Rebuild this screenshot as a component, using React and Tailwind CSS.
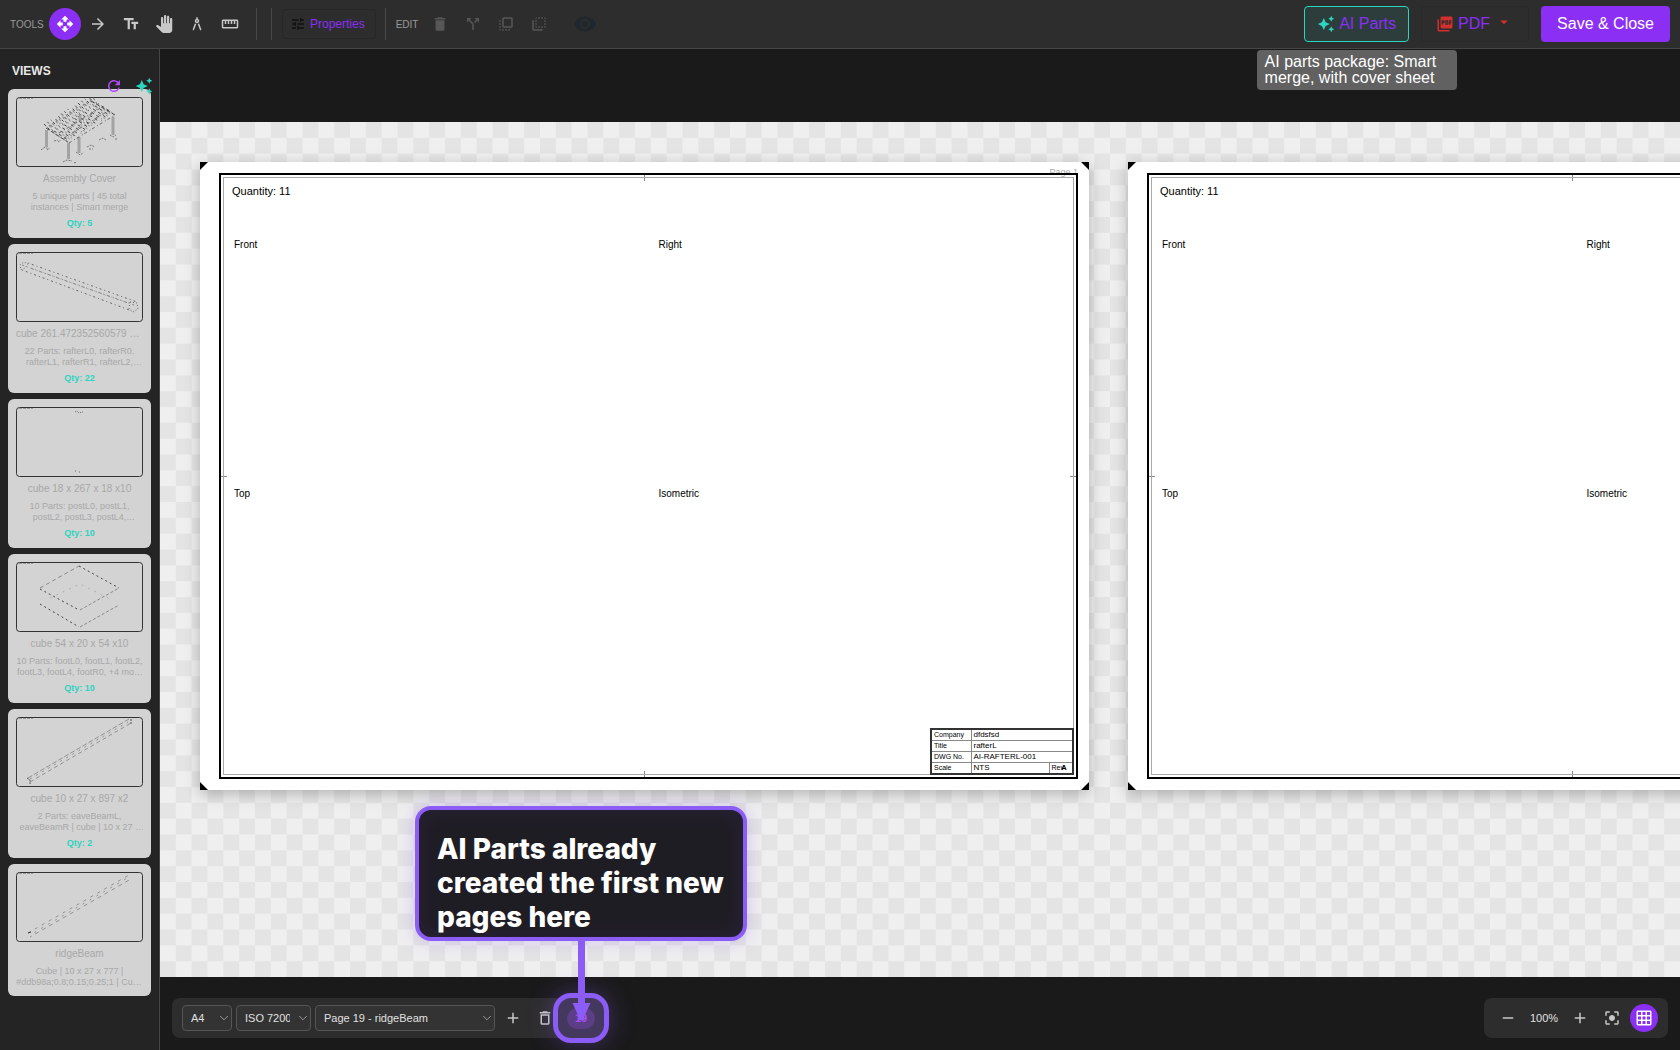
import {
  MdAdd,
  MdArchitecture,
  MdArrowDropDown,
  MdArrowForward,
  MdAutoAwesome,
  MdCallSplit,
  MdCenterFocusStrong,
  MdDelete,
  MdDeleteOutline,
  MdFlipToBack,
  MdFlipToFront,
  MdGridOn,
  MdOpenWith,
  MdPanTool,
  MdPictureAsPdf,
  MdRefresh,
  MdRemove,
  MdStraighten,
  MdTextFields,
  MdTune,
  MdVisibility,
} from 'react-icons/md';
import { FiChevronDown } from 'react-icons/fi';

const TOOLS = [
  { label: 'Select', icon: MdOpenWith, active: true },
  { label: 'Arrow', icon: MdArrowForward },
  { label: 'Text', icon: MdTextFields },
  { label: 'Pan', icon: MdPanTool },
  { label: 'Dimension', icon: MdArchitecture },
  { label: 'Measure', icon: MdStraighten },
];

const EDIT_ACTIONS = [
  { label: 'Delete', icon: MdDelete },
  { label: 'Split', icon: MdCallSplit },
  { label: 'Bring to front', icon: MdFlipToFront },
  { label: 'Send to back', icon: MdFlipToBack },
];

const VIEWS = [
  {
    title: 'Assembly Cover',
    text: '5 unique parts | 45 total instances | Smart merge',
    qty: 5,
    drawing: AssemblyDrawing,
  },
  {
    title: 'cube 261.472352560579 x 10 x 27 x22',
    text: '22 Parts: rafterL0, rafterR0, rafterL1, rafterR1, rafterL2, rafterR2, +16 more',
    qty: 22,
    drawing: RafterDrawing,
  },
  {
    title: 'cube 18 x 267 x 18 x10',
    text: '10 Parts: postL0, postL1, postL2, postL3, postL4, postR0, +4 more',
    qty: 10,
    drawing: PostDrawing,
  },
  {
    title: 'cube 54 x 20 x 54 x10',
    text: '10 Parts: footL0, footL1, footL2, footL3, footL4, footR0, +4 more | cube',
    qty: 10,
    drawing: FootDrawing,
  },
  {
    title: 'cube 10 x 27 x 897 x2',
    text: '2 Parts: eaveBeamL, eaveBeamR | cube | 10 x 27 x 897',
    qty: 2,
    drawing: EaveDrawing,
  },
  {
    title: 'ridgeBeam',
    text: 'Cube | 10 x 27 x 777 | #ddb98a;0.8;0.15;0.25;1 | Cube Part',
    drawing: RidgeDrawing,
  },
];

function AssemblyDrawing() {
  const rafters = Array.from({ length: 14 }, (_, i) => i);
  return (
    <g fill="none" stroke="#444" strokeWidth="1">
      <g stroke="#a3a3a3" strokeWidth="3">
        <path d="M30.500 33V50M52.500 46V62M63 40V56M97 20V38M64 17V25" />
      </g>
      {rafters.map((i) => {
        const x = 30 + i * 3.4;
        const y = 31 - i * 2.1;
        return (
          <g key={i} strokeDasharray="3 2">
            <path d={`M${x - 2} ${y - 4}l6 6`} strokeDashoffset={i} />
            <path d={`M${x + 3} ${y - 3}l5 8`} stroke="#777" />
            <path d={`M${x + 8} ${y + 3}l14 9`} strokeDasharray="3 3" strokeDashoffset={i * 2} />
            <path d={`M${x + 9} ${y + 6}l13 8`} stroke="#888" strokeDasharray="2 4" strokeDashoffset={i} />
          </g>
        );
      })}
      <path d="M53 46L99 18M43 36L86 10M48 41L92 14" strokeDasharray="3 3 1 2" stroke="#666" />
      <path d="M75 4L99 18M30 31L52 45" strokeDasharray="4 2" />
      <path
        d="M25 53l4-3 3 2M31 53l3-2M47 65l4-2 5 1M58 66l3-1M60 55l4 3 3-2M71 50l4-2 4 2M73 52h4M83 43l4-2 3 2M94 38l3 2 3-2M99 42h3M38 44l4-1M42 45l3-2"
        stroke="#777"
        strokeDasharray="2 1"
      />
    </g>
  );
}

function RafterDrawing() {
  return (
    <g fill="none" stroke="#666" strokeWidth="1" strokeDasharray="1 3 2 3">
      <path d="M12 11L121 50" />
      <path d="M6 13L118 53" strokeDashoffset="4" stroke="#888" />
      <path d="M14 16L112 51" stroke="#888" strokeDashoffset="2" />
      <path d="M6 18L116 59" />
      <path d="M4 13l4-3 4 2-3 4-4 2zM114 50l7 1 1 6-5 3-4-3z" strokeDasharray="1 2" />
    </g>
  );
}

function PostDrawing() {
  return (
    <g fill="none" stroke="#666" strokeWidth="1" strokeDasharray="1 1">
      <path d="M59 5l2-1 2 2 4-1M59 64h2M63 65h2" />
    </g>
  );
}

function FootDrawing() {
  return (
    <g fill="none" strokeWidth="1">
      <path d="M24 26L63 4" stroke="#888" strokeDasharray="4 3" />
      <path d="M63 4L103 26M24 27L63 48M24 42L63 65" stroke="#444" strokeDasharray="2 3" />
      <path d="M64 48L103 26M64 65L103 43" stroke="#888" strokeDasharray="3 2" />
      <path d="M34 36L64 22L94 37" stroke="#b0b0b0" strokeDasharray="2 5" />
    </g>
  );
}

function EaveDrawing() {
  return (
    <g fill="none" stroke="#929292" strokeWidth="1">
      <path d="M12 61L113 2" strokeDasharray="5 2" />
      <path d="M14 65L115 6" strokeDasharray="4 3" />
      <path d="M14 62L112 5" strokeDasharray="2 5" />
      <path d="M11 61l3 2v4M115 2v5" stroke="#555" strokeDasharray="2 1" />
    </g>
  );
}

function RidgeDrawing() {
  return (
    <g fill="none" stroke="#929292" strokeWidth="1">
      <path d="M12 61L113 3" strokeDasharray="3 5" />
      <path d="M14 65L115 7" strokeDasharray="4 4" strokeDashoffset="2" />
      <path d="M14 63L113 5" strokeDasharray="2 6" strokeDashoffset="3" />
      <path d="M12 61l3-1" stroke="#333" />
    </g>
  );
}

function Divider({ className = '' }) {
  return <div className={`h-8 w-px bg-[#484848] ${className}`} />;
}

function Toolbar() {
  return (
    <header className="relative z-20 flex h-[49px] shrink-0 items-center justify-between border-b border-[#454545] bg-[#2d2d2d] pr-[10px] pl-[10px]">
      <div className="flex items-center">
        <span className="w-[39px] text-[10px] text-[#9a9a9a]">TOOLS</span>
        <div className="flex gap-px">
          {TOOLS.map(({ label, icon: Icon, active }) => (
            <button
              key={label}
              aria-label={label}
              className={`flex size-8 items-center justify-center rounded-full ${
                active ? 'bg-[#8b2ff5] text-white' : 'text-[#c8c8c8]'
              }`}
            >
              <Icon size={18} />
            </button>
          ))}
        </div>
        <Divider className="ml-[10px]" />
        <Divider className="ml-[14px]" />
        <button className="ml-[10px] flex h-[30px] items-center gap-1 rounded border border-[#272727] pr-[10px] pl-[7px] text-xs text-[#8b2ff5]">
          <MdTune size={16} className="text-[#111]" />
          Properties
        </button>
        <Divider className="ml-[9px]" />
        <span className="ml-[10px] w-7 text-[10px] text-[#9a9a9a]">EDIT</span>
        <div className="flex gap-px">
          {EDIT_ACTIONS.map(({ label, icon: Icon }) => (
            <button key={label} aria-label={label} disabled className="flex size-8 items-center justify-center text-[#575757]">
              <Icon size={18} />
            </button>
          ))}
        </div>
        <button aria-label="Toggle visibility" disabled className="ml-3 flex size-9 items-center justify-center text-[#20262d]">
          <MdVisibility size={24} />
        </button>
      </div>

      <div className="flex items-center gap-3">
        <div className="relative">
          <button
            aria-describedby="ai-parts-tip"
            className="flex h-9 items-center gap-1 rounded border border-[#2dd4bf] bg-[#2c3d3c] px-3 text-base text-[#8b2ff5]"
          >
            <MdAutoAwesome size={18} className="text-[#2dd4bf]" />
            AI Parts
          </button>
          <div
            id="ai-parts-tip"
            role="tooltip"
            className="absolute top-full left-1/2 mt-2 w-[200px] -translate-x-1/2 rounded bg-[#616161] px-2 py-1 text-base leading-4 text-white"
          >
            AI parts package: Smart merge, with cover sheet
          </div>
        </div>
        <button className="flex h-9 items-center gap-1 rounded border border-[#292929] pr-[15px] pl-[14px] text-base text-[#8b2ff5]">
          <MdPictureAsPdf size={18} className="text-[#d32f2f]" />
          PDF
          <MdArrowDropDown size={18} className="mb-1 ml-px text-[#d32f2f]" />
        </button>
        <button className="h-9 rounded bg-[#8b2ff5] px-4 text-base text-white">Save &amp; Close</button>
      </div>
    </header>
  );
}

function ViewCard({ view }) {
  const Drawing = view.drawing;
  return (
    <li className="rounded-md bg-[#d3d3d3] p-2 text-center text-[#a8a8a8]">
      <svg viewBox="0 0 127 70" className="block w-full">
        <rect x="0.5" y="0.5" width="126" height="69" rx="3" fill="none" stroke="#333" />
        <path d="M3 1.500H17" stroke="#999" strokeDasharray="3 1" />
        <Drawing />
      </svg>
      <h3 className="mt-[5px] truncate text-[10px] leading-[14px]">{view.title}</h3>
      <p className="mt-[5px] line-clamp-2 text-[9px] leading-[11px]">{view.text}</p>
      {view.qty && <div className="mt-[3px] text-[9px] leading-[14px] font-bold text-[#2dd4bf]">Qty: {view.qty}</div>}
    </li>
  );
}

function Sidebar() {
  return (
    <aside className="w-40 shrink-0 border-r border-[#454545] bg-[#242424] px-2">
      <div className="relative flex h-10 items-center pt-[3px] pl-1">
        <h2 className="text-xs font-bold text-[#e8e8e8]">VIEWS</h2>
        <div className="absolute right-[-2px] bottom-[-6px] flex gap-3">
          <button aria-label="Refresh views" className="text-[#b04af8]">
            <MdRefresh size={18} />
          </button>
          <button aria-label="Generate views" className="text-[#2dd4bf]">
            <MdAutoAwesome size={18} />
          </button>
        </div>
      </div>
      <ul className="flex flex-col gap-[6px]">
        {VIEWS.map((view) => (
          <ViewCard key={view.title} view={view} />
        ))}
      </ul>
    </aside>
  );
}

function Checkerboard() {
  return (
    <svg className="absolute inset-0 size-full" viewBox="0 0 1536 864" preserveAspectRatio="xMinYMin slice" shapeRendering="crispEdges">
      <defs>
        <pattern id="checker" width="32" height="32" patternUnits="userSpaceOnUse">
          <rect width="32" height="32" fill="#efefef" />
          <path d="M16 0h16v16h-16zM0 16h16v16h-16z" fill="#e4e4e4" />
        </pattern>
      </defs>
      <rect width="1536" height="864" fill="url(#checker)" />
    </svg>
  );
}

function Sheet({ pageLabel }) {
  return (
    <section className="relative h-[628px] w-[889px] shrink-0 bg-white py-[11px] pr-[11px] pl-[19px] text-[10px] text-black shadow-[0_4px_14px_rgba(0,0,0,0.25)]">
      {pageLabel && <span className="absolute top-1 right-[11px] text-[9px] leading-3 text-[#aaa]">{pageLabel}</span>}
      <svg className="absolute inset-0 size-full" viewBox="0 0 889 628">
        <path d="M0 0H8L0 8zM889 0H881L889 8zM0 628H8L0 620zM889 628H881L889 620z" />
        <path d="M444.500 13V19M444.500 609V615M21 314.500H27M870 314.500H876" stroke="#888" />
      </svg>
      <div className="relative h-full border-2 border-black p-[2px]">
        <div className="flex h-full flex-col border border-[#aaa] px-2 pt-[3px]">
          <div className="text-[11px] leading-5">Quantity: 11</div>
          <div className="mt-[34px] grid flex-1 grid-cols-2 grid-rows-[249px_1fr] pl-[2px]">
            <div className="leading-5">Front</div>
            <div className="pl-[9px] leading-5">Right</div>
            <div className="leading-5">Top</div>
            <div className="pl-[9px] leading-5">Isometric</div>
          </div>
        </div>
        <table className="absolute right-[2px] bottom-[2px] w-36 border-collapse border-2 border-[#333] bg-white text-[8px] leading-[10px]">
          <tbody>
            <tr className="border-b border-[#888]">
              <th className="w-[40px] border-r border-[#888] pl-[2px] text-left text-[7px] font-normal">Company</th>
              <td colSpan={2} className="pl-[2px]">dfdsfsd</td>
            </tr>
            <tr className="border-b border-[#888]">
              <th className="border-r border-[#888] pl-[2px] text-left text-[7px] font-normal">Title</th>
              <td colSpan={2} className="pl-[2px]">rafterL</td>
            </tr>
            <tr className="border-b border-[#888]">
              <th className="border-r border-[#888] pl-[2px] text-left text-[7px] font-normal">DWG No.</th>
              <td colSpan={2} className="pl-[2px]">AI-RAFTERL-001</td>
            </tr>
            <tr>
              <th className="border-r border-[#888] pl-[2px] text-left text-[7px] font-normal">Scale</th>
              <td className="pl-[2px]">NTS</td>
              <td className="w-6 border-l border-[#888] pl-[2px]">
                <span className="text-[7px]">Rev</span>
                <b className="-ml-[3px]">A</b>
              </td>
            </tr>
          </tbody>
        </table>
      </div>
    </section>
  );
}

function Dropdown({ label, value, className }) {
  return (
    <label className={`relative flex ${className}`}>
      <span className="sr-only">{label}</span>
      <select className="h-[26px] w-full appearance-none rounded border border-[#555] bg-[#333] pr-5 pl-2 text-[11px] text-[#e0e0e0]">
        <option>{value}</option>
      </select>
      <FiChevronDown size={14} className="pointer-events-none absolute top-[6px] right-[1px] text-[#aaa]" strokeWidth={1.500} />
    </label>
  );
}

function PageCallout() {
  return (
    <div className="pointer-events-none absolute top-1/2 left-1/2">
      <div className="absolute -top-[25px] -left-7 h-[50px] w-14 rounded-[18px] border-[5px] border-[#8b5cf6] bg-[#8b5cf6]/25 shadow-[0_0_24px_rgba(139,92,246,0.35)]" />
      <svg className="absolute -top-[84px] -left-[9px]" width="19" height="88" viewBox="0 0 19 88" fill="#8b5cf6">
        <path d="M6 3a3.500 3.500 0 0 1 7 0V69H18.500L12.500 82V86H6.500V82L0.500 69H6z" />
      </svg>
      <div className="absolute -top-[212px] -left-[166px] h-[135px] w-[332px] rounded-2xl border-4 border-[#8b5cf6] bg-[#1f1d24] px-[18px] pt-[22px] font-['Inter',sans-serif] text-[28px] leading-[34px] font-extrabold text-white shadow-[0_0_18px_rgba(139,92,246,0.3),inset_0_0_20px_rgba(139,92,246,0.1)]">
        AI Parts already created the first new pages here
      </div>
    </div>
  );
}

function BottomBar() {
  return (
    <footer className="relative z-10 flex h-[73px] shrink-0 items-center justify-between px-3 pt-[9px]">
      <div className="flex h-10 items-center rounded-lg bg-[#2d2d2d] px-[10px]">
        <div className="flex gap-1">
          <Dropdown label="Paper size" value="A4" className="w-[50px]" />
          <Dropdown label="Template" value="ISO 7200" className="w-[75px]" />
          <Dropdown label="Page" value="Page 19 - ridgeBeam" className="w-[180px]" />
        </div>
        <button aria-label="Add page" className="ml-1 flex size-7 items-center justify-center text-[#c8c8c8]">
          <MdAdd size={18} />
        </button>
        <button aria-label="Delete page" className="ml-1 flex size-7 items-center justify-center text-[#c8c8c8]">
          <MdDeleteOutline size={18} />
        </button>
        <div className="relative ml-2 flex h-[21px] w-7 items-center justify-center rounded-full bg-[#4b3560] text-[11px] font-bold text-[#b04af8]">
          19
          <PageCallout />
        </div>
      </div>

      <div className="flex h-10 items-center rounded-lg bg-[#2d2d2d] px-[10px] text-[#c8c8c8]">
        <button aria-label="Zoom out" className="flex size-7 items-center justify-center">
          <MdRemove size={18} />
        </button>
        <span className="w-11 text-center text-[11px] text-[#e0e0e0]">100%</span>
        <button aria-label="Zoom in" className="flex size-7 items-center justify-center">
          <MdAdd size={18} />
        </button>
        <button aria-label="Fit to screen" className="ml-1 flex size-7 items-center justify-center">
          <MdCenterFocusStrong size={18} />
        </button>
        <button aria-label="Toggle grid" className="ml-1 flex size-7 items-center justify-center rounded-full bg-[#8b2ff5] text-white">
          <MdGridOn size={18} />
        </button>
      </div>
    </footer>
  );
}

export default function App() {
  return (
    <div className="flex h-screen flex-col overflow-hidden bg-[#1a1a1a] font-['Liberation_Sans',Arial,sans-serif]">
      <Toolbar />
      <div className="flex min-h-0 flex-1">
        <Sidebar />
        <main className="flex min-w-0 flex-1 flex-col pt-[73px]">
          <div className="relative min-h-0 flex-1 overflow-hidden">
            <Checkerboard />
            <div className="relative flex gap-[39px] p-10">
              <Sheet pageLabel="Page 1" />
              <Sheet />
            </div>
          </div>
          <BottomBar />
        </main>
      </div>
    </div>
  );
}
